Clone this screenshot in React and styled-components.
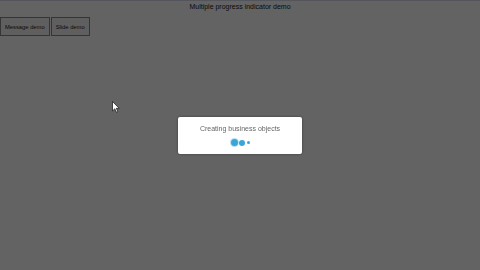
import React from "react";
import styled, { createGlobalStyle } from "styled-components";

const GlobalStyle = createGlobalStyle`
  html, body {
    margin: 0;
    padding: 0;
    width: 480px;
    height: 270px;
    overflow: hidden;
    background: #ffffff;
    font-family: "Liberation Sans", Arial, sans-serif;
  }
`;

export default function App() {
  return (
    <>
      <GlobalStyle />
      <Page>
        <Title>Multiple progress indicator demo</Title>
        <Toolbar>
          <Button>Message demo</Button>
          <Button>Slide demo</Button>
        </Toolbar>
      </Page>
      <Overlay>
        <Dialog>
          <Message>Creating business objects</Message>
          <Dots>
            <Dot size={7} ring />
            <Dot size={6} />
            <Dot size={3} />
          </Dots>
        </Dialog>
      </Overlay>
      <Cursor />
    </>
  );
}

function Cursor() {
  return (
    <CursorWrap>
      <svg width="8" height="12" viewBox="0 0 8 12" xmlns="http://www.w3.org/2000/svg">
        <path d="M0.5 0.5 L0.5 10 L2.8 7.8 L4.4 11.3 L5.8 10.6 L4.3 7.3 L7.2 7.3 Z" fill="#ffffff" stroke="#222" strokeWidth="0.8" strokeLinejoin="round" />
      </svg>
    </CursorWrap>
  );
}

const Page = styled.div`
  width: 480px;
  height: 270px;
  border-top: 1px solid #d6d8ec;
  box-sizing: border-box;
`;

const Title = styled.div`
  text-align: center;
  font-size: 7px;
  color: #222;
  height: 15px;
  line-height: 12px;
`;

const Toolbar = styled.div`
  display: flex;
  gap: 1px;
  padding-top: 1px;
`;

const Button = styled.button`
  font-family: "Liberation Sans", Arial, sans-serif;
  font-size: 5.8px;
  color: #222;
  background: #f4f4f4;
  border: 1px solid #8a8a8a;
  padding: 0 4px;
  height: 19px;
  margin: 0;
`;

const Overlay = styled.div`
  position: fixed;
  inset: 0;
  background: rgba(0, 0, 0, 0.61);
  display: flex;
  align-items: center;
  justify-content: center;
`;

const Dialog = styled.div`
  width: 124px;
  height: 37px;
  background: #ffffff;
  border-radius: 2px;
  box-shadow: 0 0 3px rgba(0, 0, 0, 0.4);
  display: flex;
  flex-direction: column;
  align-items: center;
  padding-top: 8px;
  box-sizing: border-box;
  gap: 6px;
`;

const Message = styled.div`
  font-size: 7px;
  color: #666;
  line-height: 8px;
`;

const Dots = styled.div`
  display: flex;
  align-items: center;
  gap: 1.5px;
  height: 8px;
`;

const Dot = styled.span`
  width: ${(p) => p.size}px;
  height: ${(p) => p.size}px;
  border-radius: 50%;
  background: #3aa6d8;
  box-shadow: ${(p) => (p.ring ? "0 0 0 1px rgba(58, 166, 216, 0.35)" : "none")};
`;

const CursorWrap = styled.div`
  position: fixed;
  left: 112px;
  top: 101px;
  line-height: 0;
`;
